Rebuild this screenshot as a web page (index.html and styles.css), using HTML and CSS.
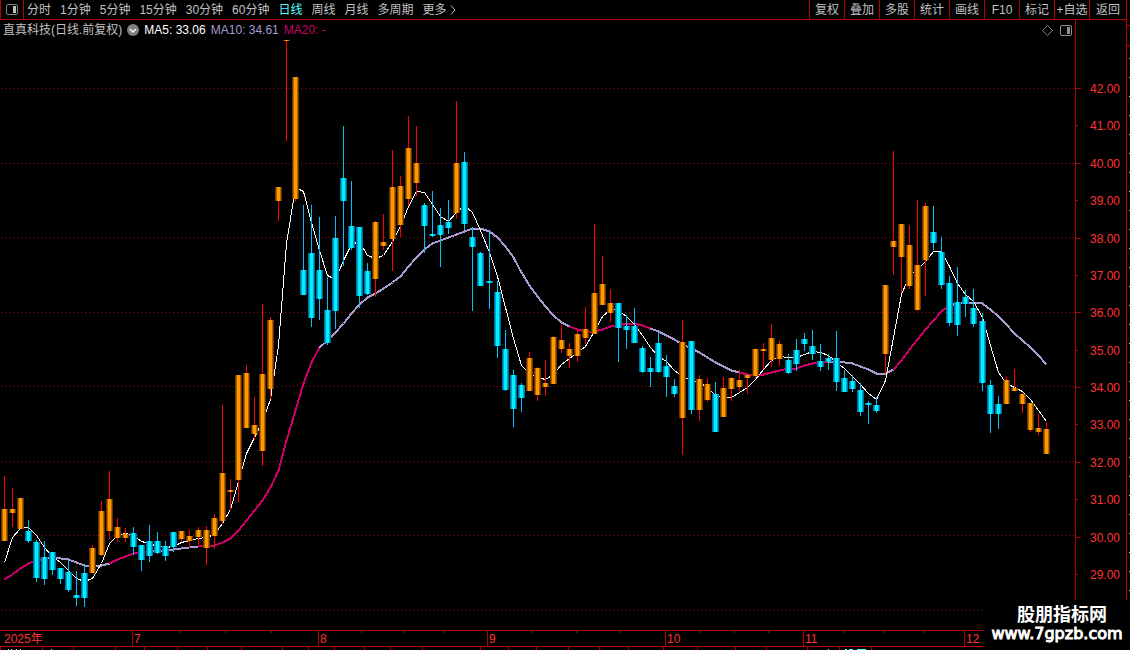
FILE: index.html
```html
<!DOCTYPE html>
<html lang="zh-CN">
<head>
    <meta charset="UTF-8">
    <meta name="viewport" content="width=device-width, initial-scale=1.0">
    <title>直真科技 日线</title>
    <link rel="stylesheet" href="styles.css">
</head>
<body>
    <div class="window">
        <header class="toolbar">
            <button type="button" class="panel-toggle" aria-label="侧栏">
                <svg width="12" height="11" viewBox="0 0 12 11"><rect x="0.5" y="0.5" width="11" height="10" rx="1.5" fill="none" stroke="#808080"/><rect x="7" y="2" width="3" height="7" fill="#c0c0c0"/></svg>
            </button>
            <nav class="periods">
                <button type="button">分时</button>
                <button type="button">1分钟</button>
                <button type="button">5分钟</button>
                <button type="button">15分钟</button>
                <button type="button">30分钟</button>
                <button type="button">60分钟</button>
                <button type="button" class="active">日线</button>
                <button type="button">周线</button>
                <button type="button">月线</button>
                <button type="button">多周期</button>
                <button type="button" class="more">更多
                    <svg width="6" height="10" viewBox="0 0 6 10"><path d="M1 0.5L5 5L1 9.5" fill="none" stroke="#c0c0c0"/></svg>
                </button>
            </nav>
            <div class="tools">
                <button type="button">复权</button>
                <button type="button">叠加</button>
                <button type="button">多股</button>
                <button type="button">统计</button>
                <button type="button">画线</button>
                <button type="button">F10</button>
                <button type="button">标记</button>
                <button type="button">+自选</button>
                <button type="button">返回</button>
            </div>
        </header>

        <main class="main">
            <section class="chart-area">
                <div class="legend">
                    <span class="stock">直真科技(日线.前复权)</span>
                    <button type="button" class="expand" aria-label="展开">
                        <svg width="12" height="12" viewBox="0 0 12 12"><circle cx="6" cy="6" r="6" fill="#808080"/><path d="M3 5L6 8L9 5" fill="none" stroke="#fff" stroke-width="1.3"/></svg>
                    </button>
                    <span class="ma5">MA5: 33.06</span>
                    <span class="ma10">MA10: 34.61</span>
                    <span class="ma20">MA20: -</span>
                    <div class="legend-icons">
                        <svg width="11" height="11" viewBox="0 0 11 11"><path d="M5.5 0.5L10.5 5.5L5.5 10.5L0.5 5.5Z" fill="none" stroke="#808080"/></svg>
                        <svg width="12" height="11" viewBox="0 0 12 11"><rect x="0.5" y="0.5" width="11" height="10" rx="1.5" fill="none" stroke="#909090"/><rect x="7" y="2" width="3" height="7" fill="#909090"/></svg>
                    </div>
                </div>
                <svg class="chart" id="chart" viewBox="0 40 1075 590" preserveAspectRatio="none"></svg>
            </section>
            <ul class="axis">
                <li>42.00</li>
                <li>41.00</li>
                <li>40.00</li>
                <li>39.00</li>
                <li>38.00</li>
                <li>37.00</li>
                <li>36.00</li>
                <li>35.00</li>
                <li>34.00</li>
                <li>33.00</li>
                <li>32.00</li>
                <li>31.00</li>
                <li>30.00</li>
                <li>29.00</li>
            </ul>
        </main>

        <div class="dates">
            <span>2025年</span>
            <span>7</span>
            <span>8</span>
            <span>9</span>
            <span>10</span>
            <span>11</span>
            <span>12</span>
        </div>
        <svg class="tabs-edge" id="tabsEdge" viewBox="0 0 1126 3" preserveAspectRatio="none"></svg>
    </div>
    <aside class="rail"></aside>

    <div class="watermark">
        <strong>股朋指标网</strong>
        <span>www.7gpzb.com</span>
    </div>

    <script src="script.js"></script>
</body>
</html>
```

FILE: styles.css
```css
* {
    box-sizing: border-box;
}
body {
    display: flex;
    height: 100vh;
    margin: 0;
    overflow: hidden;
    background: #000;
    color: #c0c0c0;
    font-family: "Liberation Sans", "Noto Sans CJK SC", sans-serif;
    font-size: 12px;
}
button {
    padding: 0;
    border: 0;
    background: none;
    color: inherit;
    font: inherit;
    white-space: nowrap;
    cursor: pointer;
}
svg {
    display: block;
}
.window {
    display: flex;
    flex: 1;
    flex-direction: column;
    min-width: 0;
}

/* top toolbar */
.toolbar {
    display: flex;
    height: 20px;
    border-bottom: 1px solid #b40000;
    line-height: 18px;
}
.panel-toggle {
    display: flex;
    align-items: center;
    justify-content: center;
    width: 24px;
    border-left: 1px solid #b40000;
    border-right: 1px solid #b40000;
}
.periods {
    display: flex;
    gap: 9px;
    padding-left: 3px;
}
.periods .active {
    color: #54fcfc;
}
.more {
    display: flex;
    align-items: center;
    gap: 3px;
}
.tools {
    display: flex;
    margin-left: auto;
}
.tools button {
    width: 35px;
    border-left: 1px solid #b40000;
}
.tools button:last-child {
    width: 37px;
}

/* chart */
.main {
    display: flex;
    flex: 1;
    min-height: 0;
}
.chart-area {
    display: flex;
    flex: 1;
    flex-direction: column;
    min-width: 0;
}
.legend {
    display: flex;
    align-items: center;
    gap: 5px;
    height: 20px;
    padding: 0 3px;
    line-height: 18px;
}
.ma5 {
    color: #fff;
}
.ma10 {
    color: #a99bd0;
}
.ma20 {
    color: #cc0066;
}
.legend-icons {
    display: flex;
    gap: 7px;
    margin-left: auto;
}
.chart {
    flex: 1;
    width: 100%;
    min-height: 0;
}
.chart .grid {
    stroke: #a01010;
    stroke-dasharray: 1 3;
}
.chart polyline {
    fill: none;
    shape-rendering: crispEdges;
}
.chart .line-fast {
    stroke: #fff;
}
.chart .line-slow {
    stroke: #a99bd0;
    stroke-width: 2;
}
.chart .line-slow.rise {
    stroke: #cc0066;
}
.axis {
    display: flex;
    flex-direction: column;
    justify-content: space-between;
    width: 51px;
    margin: 0;
    padding: 63px 0 49px;
    border-left: 1px solid #b40000;
    color: #ff3333;
    line-height: 12px;
    list-style: none;
}
.axis li {
    padding-left: 14px;
    background: linear-gradient(#b40000, #b40000) 0 5px / 5px 1px no-repeat;
}
.axis li:nth-child(even) {
    background-size: 2px 1px;
}

/* date row, columns follow the trading days of each month */
.dates {
    display: grid;
    grid-template-columns: 132fr 186fr 169fr 178fr 138fr 161fr 162fr;
    height: 17px;
    border-top: 1px solid #b40000;
    border-bottom: 1px solid #b40000;
    color: #ff3333;
    line-height: 16px;
}
.dates span {
    padding-left: 1px;
    border-left: 1px solid #b40000;
    background-image: linear-gradient(#b40000, #b40000), linear-gradient(#b40000, #b40000), linear-gradient(#b40000, #b40000);
    background-position: 25% 0, 50% 0, 75% 0;
    background-size: 1px 2px;
    background-repeat: no-repeat;
}
.dates span:first-child {
    padding-left: 4px;
    border-left: 0;
    background: none;
}
.tabs-edge {
    width: 100%;
    height: 3px;
}

/* edge of the quote panel */
.rail {
    width: 4px;
    border-left: 1px solid #b40000;
    background:
        linear-gradient(#b40000, #b40000) 0 25px / 3px 1px no-repeat,
        linear-gradient(#b40000, #b40000) 0 45px / 3px 1px no-repeat,
        repeating-linear-gradient(#000 0, #000 18px, #c0c0c0 18px, #c0c0c0 19px) 2px 40px / 1px 100% no-repeat;
}
.watermark {
    position: absolute;
    right: 0;
    bottom: 0;
    display: flex;
    flex-direction: column;
    align-items: center;
    width: 146px;
    height: 50px;
    padding-top: 5px;
    background: #000;
    color: #fff;
}
.watermark strong {
    padding-left: 10px;
    font-size: 18px;
    line-height: 20px;
}
.watermark span {
    font-family: "DejaVu Sans", sans-serif;
    font-size: 16px;
    line-height: 18px;
    -webkit-text-stroke: 1px #fff;
    paint-order: stroke;
    color: #fff;
}
```

FILE: script.js
```js
const SVG = 'http://www.w3.org/2000/svg';
const chart = document.getElementById('chart');
const tabsEdge = document.getElementById('tabsEdge');

// up/down flag, high, body top, body bottom, low
const candles = [
    ['u', 476, 509, 541, 541], ['u', 488, 509, 513, 527], ['u', 498, 498, 529, 529], ['d', 520, 531, 541, 543],
    ['d', 540, 542, 578, 582], ['d', 541, 557, 579, 585], ['d', 552, 552, 570, 575], ['d', 568, 568, 579, 584],
    ['d', 561, 572, 590, 592], ['d', 571, 595, 598, 606], ['d', 565, 573, 598, 607], ['u', 545, 548, 573, 573],
    ['u', 501, 511, 555, 556], ['u', 471, 499, 531, 539], ['u', 518, 527, 538, 542], ['u', 528, 534, 538, 542],
    ['d', 527, 533, 547, 555], ['d', 545, 545, 560, 571], ['d', 525, 541, 556, 562], ['d', 532, 541, 553, 554],
    ['d', 541, 546, 556, 561], ['d', 532, 532, 547, 552], ['u', 531, 531, 539, 542], ['u', 530, 536, 541, 548],
    ['u', 527, 530, 537, 546], ['u', 526, 530, 548, 565], ['u', 514, 518, 536, 549], ['u', 405, 473, 521, 524],
    ['u', 479, 490, 492, 510], ['u', 375, 375, 480, 502], ['u', 365, 373, 428, 428], ['u', 397, 425, 434, 440],
    ['u', 304, 374, 451, 466], ['u', 317, 320, 389, 399], ['u', 187, 187, 201, 221], ['u', 40, 40, 41, 141],
    ['u', 77, 77, 199, 201], ['d', 205, 270, 295, 295], ['d', 205, 253, 318, 327], ['d', 217, 270, 299, 320],
    ['d', 277, 310, 343, 345], ['d', 216, 238, 311, 329], ['d', 126, 178, 201, 266], ['d', 181, 226, 248, 250],
    ['d', 227, 227, 296, 308], ['d', 263, 271, 294, 295], ['u', 221, 222, 279, 297], ['u', 214, 242, 246, 250],
    ['u', 150, 187, 239, 271], ['u', 176, 186, 225, 237], ['u', 116, 148, 199, 206], ['u', 126, 163, 183, 196],
    ['d', 203, 205, 226, 253], ['d', 191, 234, 236, 237], ['d', 208, 225, 235, 267], ['d', 200, 222, 228, 234],
    ['u', 101, 163, 213, 219], ['d', 152, 162, 224, 230], ['d', 227, 237, 247, 311], ['d', 252, 253, 286, 286],
    ['d', 231, 281, 283, 309], ['d', 281, 292, 346, 358], ['d', 330, 349, 390, 391], ['d', 370, 375, 409, 427],
    ['d', 383, 385, 398, 412], ['u', 352, 358, 391, 391], ['u', 367, 368, 395, 401], ['u', 360, 383, 387, 396],
    ['u', 336, 337, 384, 384], ['u', 325, 340, 349, 353], ['u', 343, 349, 356, 368], ['u', 330, 334, 356, 362],
    ['u', 307, 329, 338, 344], ['u', 224, 293, 334, 334], ['u', 256, 284, 305, 305], ['u', 289, 303, 313, 322],
    ['d', 303, 303, 328, 362], ['d', 315, 326, 330, 349], ['d', 308, 326, 343, 343], ['d', 346, 348, 372, 373],
    ['d', 357, 368, 372, 387], ['d', 333, 343, 372, 373], ['d', 355, 366, 377, 397], ['d', 379, 386, 394, 397],
    ['u', 320, 342, 418, 455], ['d', 341, 341, 410, 414], ['u', 375, 379, 410, 421], ['u', 378, 384, 400, 402],
    ['d', 382, 394, 432, 432], ['u', 377, 388, 417, 417], ['u', 377, 378, 389, 401], ['u', 370, 380, 387, 391],
    ['u', 375, 375, 378, 394], ['u', 348, 349, 376, 379], ['u', 343, 349, 351, 369], ['u', 324, 338, 360, 367],
    ['u', 341, 344, 359, 366], ['d', 354, 360, 373, 374], ['d', 339, 350, 364, 371], ['d', 333, 339, 344, 351],
    ['d', 330, 346, 354, 360], ['d', 344, 361, 367, 371], ['d', 354, 358, 362, 370], ['d', 331, 358, 382, 391],
    ['d', 370, 378, 392, 392], ['d', 375, 381, 389, 392], ['d', 383, 390, 412, 416], ['d', 401, 403, 405, 424],
    ['d', 397, 405, 411, 413], ['u', 285, 285, 354, 374], ['u', 151, 241, 247, 275], ['u', 224, 224, 257, 293],
    ['u', 225, 245, 286, 289], ['u', 200, 265, 310, 311], ['u', 203, 206, 260, 296], ['d', 206, 232, 243, 250],
    ['d', 237, 252, 285, 289], ['d', 276, 283, 323, 326], ['d', 267, 302, 325, 336], ['d', 290, 297, 304, 317],
    ['d', 289, 308, 324, 327], ['d', 313, 321, 383, 391], ['d', 380, 385, 414, 433], ['d', 396, 404, 414, 429],
    ['u', 376, 380, 404, 404], ['u', 369, 388, 391, 391], ['u', 393, 394, 404, 413], ['u', 403, 403, 430, 432],
    ['u', 414, 428, 432, 435], ['u', 422, 429, 454, 454]
];

const fast = [
    562, 537, 528, 527, 535, 547, 556, 562, 570, 578, 581, 578, 563, 543, 535, 533, 535, 541, 543, 546,
    547, 546, 542, 540, 538, 537, 534, 523, 509, 481, 453, 437, 421, 399, 345, 243, 187, 191, 222, 250,
    275, 279, 260, 244, 241, 255, 258, 255, 241, 226, 206, 191, 192, 204, 216, 221, 212, 205, 212, 230,
    252, 276, 307, 338, 365, 373, 377, 379, 374, 364, 358, 352, 346, 331, 316, 309, 310, 316, 324, 335,
    347, 356, 361, 370, 376, 380, 382, 387, 395, 397, 397, 392, 387, 379, 369, 360, 356, 357, 357, 354,
    351, 352, 355, 362, 368, 376, 384, 393, 399, 380, 337, 294, 275, 269, 261, 251, 251, 266, 283, 294,
    301, 317, 345, 372, 383, 387, 391, 399, 410, 421
];

const slow = [
    579, 574, 568, 563, 560, 558, 557, 558, 559, 562, 565, 566, 565, 563, 559, 556, 553, 552, 551, 550,
    550, 549, 548, 547, 546, 545, 545, 542, 538, 530, 520, 510, 500, 487, 470, 440, 410, 383, 362, 347,
    340, 332, 323, 313, 304, 297, 293, 288, 282, 276, 266, 257, 249, 243, 240, 237, 234, 231, 228, 228,
    231, 237, 246, 257, 272, 285, 296, 306, 315, 322, 326, 329, 331, 331, 329, 326, 325, 323, 323, 325,
    328, 331, 335, 339, 344, 348, 352, 357, 362, 366, 370, 372, 374, 374, 374, 372, 370, 368, 368, 365,
    363, 362, 361, 361, 362, 363, 366, 369, 373, 373, 369, 360, 349, 339, 329, 320, 311, 305, 303, 302,
    302, 303, 309, 316, 324, 333, 340, 347, 355, 364
];

// index where the slow line changes colour, starting with a rising part
const turns = [0, 5, 13, 18, 24, 39, 70, 80, 91, 102, 110, 117, 129];

// outer, middle and core colour of a candle body
const shades = {
    u: ['#663300', '#b36200', '#ff9900'],
    d: ['#006c9c', '#00a4d0', '#00f0ff']
};
const wicks = { u: '#ff0000', d: '#00c0ff' };

const add = (parent, name, attrs) => {
    const el = document.createElementNS(SVG, name);
    for (const key in attrs) {
        el.setAttribute(key, attrs[key]);
    }
    parent.appendChild(el);
};

const rect = (parent, x, y, width, height, fill) => {
    add(parent, 'rect', { x, y, width, height, fill, 'shape-rendering': 'crispEdges' });
};

const getX = i => Math.floor(4.05 + i * 8.0825);

const getPoints = (values, from, to) => {
    const points = [];
    for (let i = from; i <= to; i++) {
        points.push(`${getX(i) + 0.5},${values[i] + 0.5}`);
    }
    return points.join(' ');
};

// Grid
[88, 163, 237, 312, 386, 461, 535, 610].forEach(y => {
    add(chart, 'line', { class: 'grid', x1: 1, x2: 1075, y1: y + 0.5, y2: y + 0.5 });
});

// Average lines
for (let i = 0; i < turns.length - 1; i++) {
    add(chart, 'polyline', {
        class: i % 2 === 0 ? 'line-slow rise' : 'line-slow',
        points: getPoints(slow, turns[i], turns[i + 1])
    });
}
add(chart, 'polyline', { class: 'line-fast', points: getPoints(fast, 0, fast.length - 1) });

// Candles
candles.forEach(([dir, high, top, bottom, low], i) => {
    const x = getX(i);
    const [outer, middle, core] = shades[dir];
    rect(chart, x, high, 1, low - high, wicks[dir]);
    rect(chart, x - 3, top, 7, bottom - top, outer);
    rect(chart, x - 2, top, 5, bottom - top, middle);
    rect(chart, x - 1, top, 3, bottom - top, core);
});

// Top edge of the tab bar below the chart
[0, 42, 73, 115, 144, 177, 207, 241, 282, 308, 334, 364, 390, 422, 480, 508, 536, 568, 599, 628, 663, 697, 735, 766, 807, 839, 871].forEach(x => {
    rect(tabsEdge, x, 0, 1, 3, '#b40000');
});
[8, 11, 16, 20, 51, 828].forEach(x => {
    rect(tabsEdge, x, 2, 1, 1, '#c0c0c0');
});
[[845, 2], [849, 4], [857, 9]].forEach(([x, width]) => {
    rect(tabsEdge, x, 2, width, 1, '#54fcfc');
});
```
